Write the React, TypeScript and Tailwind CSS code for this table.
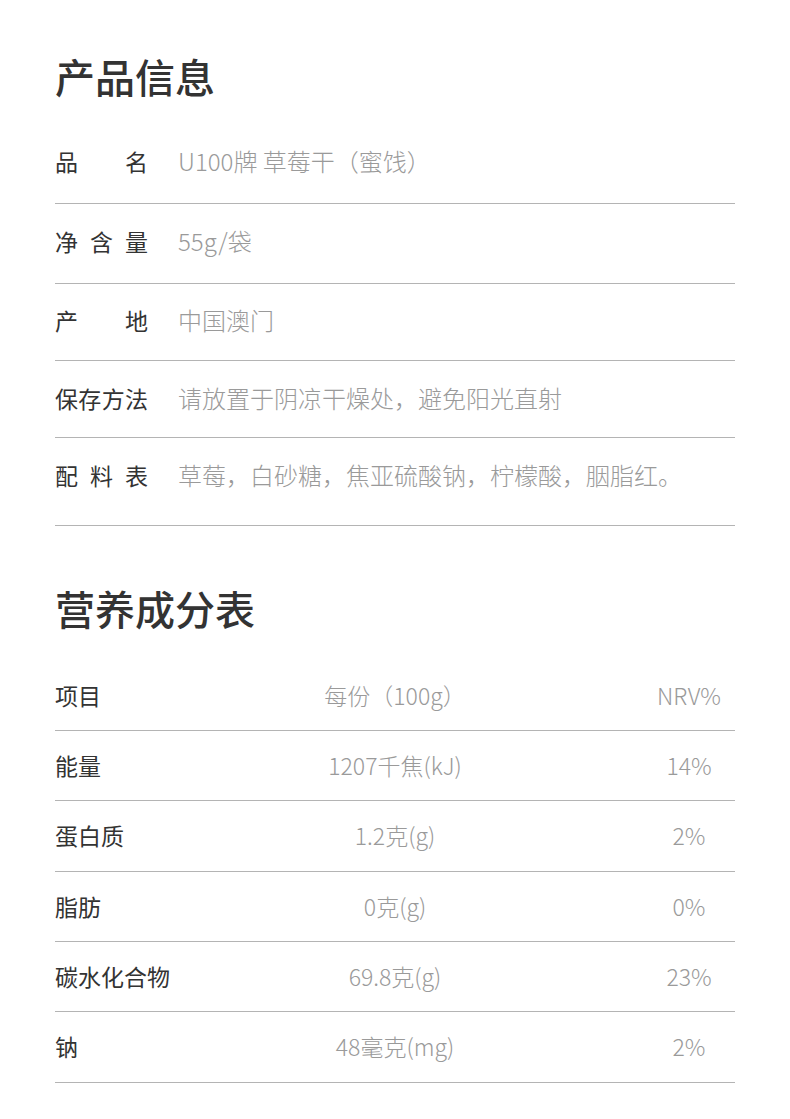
import React from "react";

const font = { fontFamily: '"Noto Sans CJK SC", "Noto Sans", sans-serif' };

const infoRows: { label: string[]; value: string; pad: string }[] = [
  { label: ["品", "名"], value: "U100牌 草莓干（蜜饯）", pad: "pt-[25px] pb-[30px]" },
  { label: ["净", "含", "量"], value: "55g/袋", pad: "pt-[25px] pb-[30px]" },
  { label: ["产", "地"], value: "中国澳门", pad: "pt-[24px] pb-[28px]" },
  { label: ["保", "存", "方", "法"], value: "请放置于阴凉干燥处，避免阳光直射", pad: "pt-[25px] pb-[27px]" },
  { label: ["配", "料", "表"], value: "草莓，白砂糖，焦亚硫酸钠，柠檬酸，胭脂红。", pad: "pt-[25px] pb-[38px]" },
];

const nutrition = [
  { r: ["能量", "1207千焦(kJ)", "14%"], pb: "pb-[23px]" },
  { r: ["蛋白质", "1.2克(g)", "2%"], pb: "pb-[24px]" },
  { r: ["脂肪", "0克(g)", "0%"], pb: "pb-[23px]" },
  { r: ["碳水化合物", "69.8克(g)", "23%"], pb: "pb-[23px]" },
  { r: ["钠", "48毫克(mg)", "2%"], pb: "pb-[24px]" },
];

export default function App() {
  return (
    <div
      className="w-[790px] min-h-[1119px] bg-white px-[55px] pt-[56px]"
      style={font}
    >
      <h1 className="text-[40px] leading-[40px] font-medium text-[#333333] mb-[28px]">产品信息</h1>
      <div>
        {infoRows.map((r, i) => (
          <div
            key={i}
            className={`flex items-start border-b border-[#b4b4b4] ${r.pad}`}
          >
            <div className="flex w-[93px] justify-between text-[23px] leading-[24px] text-[#333333]">
              {r.label.map((c, j) => (
                <span key={j}>{c}</span>
              ))}
            </div>
            <div className="ml-[30px] text-[24px] leading-[24px] font-light text-[#9a9a9a]">{r.value}</div>
          </div>
        ))}
      </div>

      <h1 className="mt-[62px] text-[40px] leading-[40px] font-medium text-[#333333]">营养成分表</h1>
      <div className="mt-[29px]">
        <div className="grid grid-cols-[92px_1fr_92px] items-center border-b border-[#b4b4b4] pt-[26px] pb-[23px] leading-[24px]">
          <div className="text-[23px] text-[#333333]">项目</div>
          <div className="text-center text-[23px] font-light text-[#9a9a9a]">每份（100g）</div>
          <div className="text-center text-[23px] font-light text-[#9a9a9a]">NRV%</div>
        </div>
        {nutrition.map((row, i) => (
          <div
            key={i}
            className={`grid grid-cols-[92px_1fr_92px] items-center border-b border-[#b4b4b4] pt-[22px] ${row.pb} leading-[24px]`}
          >
            <div className="whitespace-nowrap text-[23px] text-[#333333]">{row.r[0]}</div>
            <div className="text-center text-[23px] font-light text-[#9a9a9a]">{row.r[1]}</div>
            <div className="text-center text-[23px] font-light text-[#9a9a9a]">{row.r[2]}</div>
          </div>
        ))}
      </div>
    </div>
  );
}
